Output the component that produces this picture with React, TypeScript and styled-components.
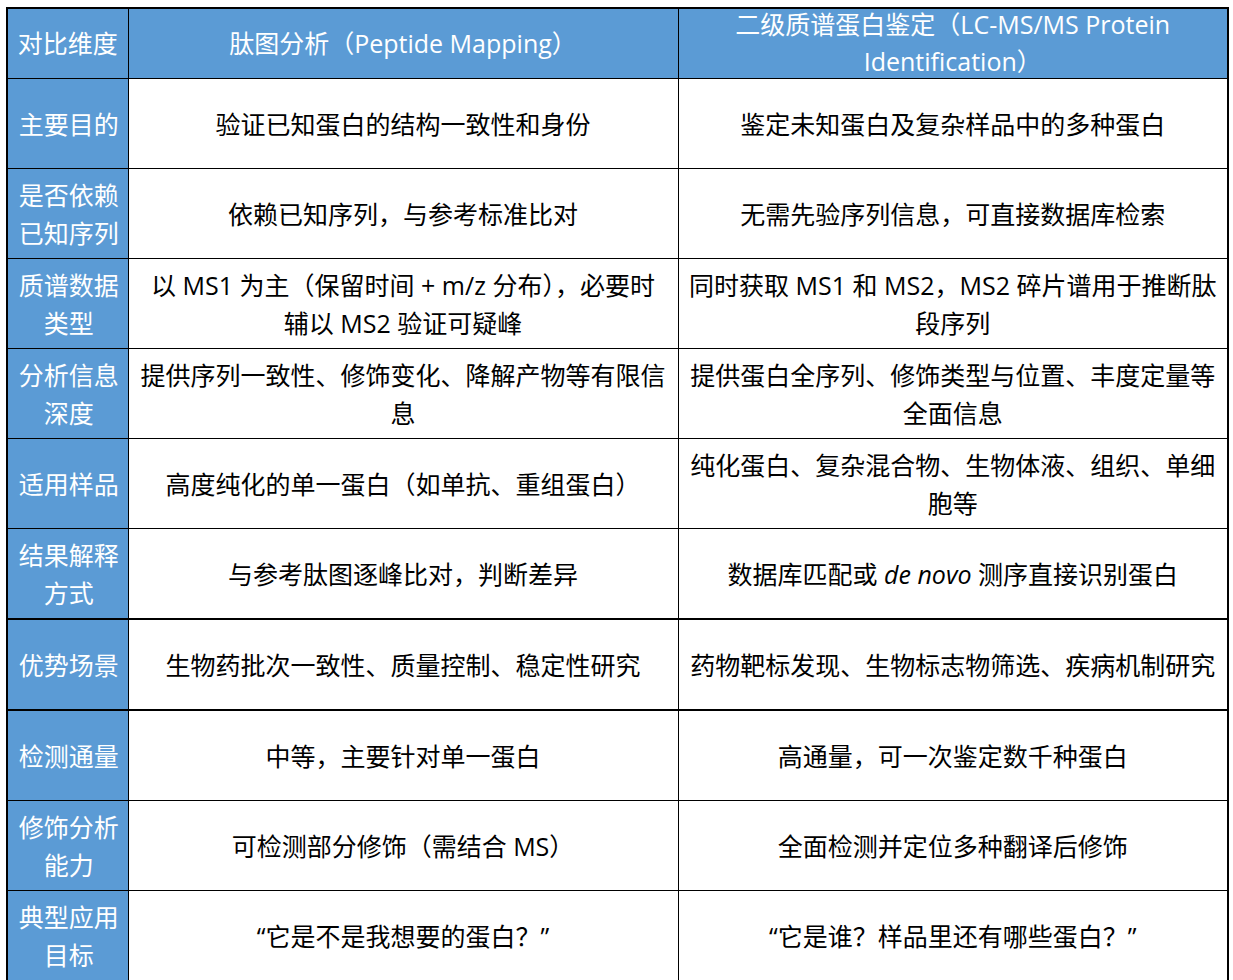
import styled, { createGlobalStyle } from "styled-components";

const GlobalStyle = createGlobalStyle`
    body {
        margin: 0;
        background: #ffffff;
        font-family: "Open Sans", "Noto Sans CJK SC", sans-serif;
    }
`

const Page = styled.div`
    padding: 7px 0 0 6px;
`

const Table = styled.table`
    width: 1223px;
    border-collapse: collapse;
    table-layout: fixed;
    border: 2px solid #000;
`

const HeadCell = styled.th`
    height: 69px;
    background-color: #5b9bd5;
    color: #fff;
    font-weight: 400;
    font-size: 25px;
    line-height: 37px;
    text-align: center;
    border: 1px solid #000;
    padding: 0 8px;
`

const HeadText = styled.div`
    margin: -3px 0 -2px;
`

const LabelCell = styled.td`
    height: 89px;
    background-color: #5b9bd5;
    color: #fff;
    font-size: 25px;
    line-height: 38px;
    text-align: center;
    border: 1px solid #000;
    padding: 0 6px 0 8px;
`

const Cell = styled.td`
    color: #000;
    font-size: 25px;
    line-height: 38px;
    text-align: center;
    border: 1px solid #000;
    padding: 0 9px;
`

const Row = styled.tr<{ $thick?: boolean }>`
    ${(p) => (p.$thick ? "border-top: 2px solid #000;" : "")}
`

const rows: { label: string; a: React.ReactNode; b: React.ReactNode; thick?: boolean }[] = [
    { label: "主要目的", a: "验证已知蛋白的结构一致性和身份", b: "鉴定未知蛋白及复杂样品中的多种蛋白" },
    { label: "是否依赖已知序列", a: "依赖已知序列，与参考标准比对", b: "无需先验序列信息，可直接数据库检索" },
    { label: "质谱数据类型", a: "以 MS1 为主（保留时间 + m/z 分布），必要时 辅以 MS2 验证可疑峰", b: "同时获取 MS1 和 MS2，MS2 碎片谱用于推断肽段序列" },
    { label: "分析信息深度", a: "提供序列一致性、修饰变化、降解产物等有限信息", b: "提供蛋白全序列、修饰类型与位置、丰度定量等全面信息" },
    { label: "适用样品", a: "高度纯化的单一蛋白（如单抗、重组蛋白）", b: "纯化蛋白、复杂混合物、生物体液、组织、单细胞等" },
    { label: "结果解释方式", a: "与参考肽图逐峰比对，判断差异", b: <>数据库匹配或 <i>de novo</i> 测序直接识别蛋白</> },
    { label: "优势场景", a: "生物药批次一致性、质量控制、稳定性研究", b: "药物靶标发现、生物标志物筛选、疾病机制研究", thick: true },
    { label: "检测通量", a: "中等，主要针对单一蛋白", b: "高通量，可一次鉴定数千种蛋白", thick: true },
    { label: "修饰分析能力", a: "可检测部分修饰（需结合 MS）", b: "全面检测并定位多种翻译后修饰" },
    { label: "典型应用目标", a: "“它是不是我想要的蛋白？”", b: "“它是谁？样品里还有哪些蛋白？”" },
];

function App() {
    return (
        <Page>
            <GlobalStyle />
            <Table>
                <colgroup>
                    <col style={{ width: 121 }} />
                    <col style={{ width: 550 }} />
                    <col style={{ width: 550 }} />
                </colgroup>
                <thead>
                    <tr>
                        <HeadCell>对比维度</HeadCell>
                        <HeadCell>肽图分析（Peptide Mapping）</HeadCell>
                        <HeadCell>
                            <HeadText>二级质谱蛋白鉴定（LC-MS/MS Protein Identification）</HeadText>
                        </HeadCell>
                    </tr>
                </thead>
                <tbody>
                    {rows.map((r) => (
                        <Row key={r.label} $thick={r.thick}>
                            <LabelCell>{r.label}</LabelCell>
                            <Cell>{r.a}</Cell>
                            <Cell>{r.b}</Cell>
                        </Row>
                    ))}
                </tbody>
            </Table>
        </Page>
    );
}

export default App;
